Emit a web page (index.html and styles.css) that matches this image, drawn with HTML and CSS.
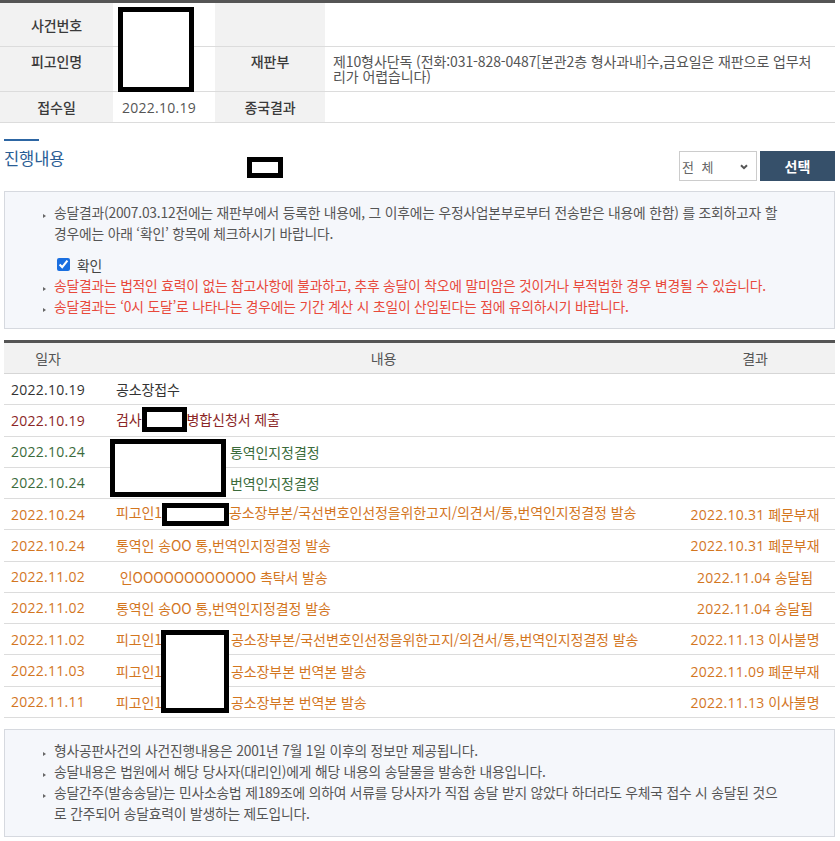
FILE: index.html
```html
<!DOCTYPE html>
<html lang="ko">
<head>
<meta charset="utf-8">
<title>사건진행내용</title>
<link rel="stylesheet" href="styles.css">
</head>
<body>
<div class="page">
  <div class="case-info">
    <div class="th">사건번호</div>
    <div class="td"></div>
    <div class="th"></div>
    <div class="td"></div>

    <div class="th th-top">피고인명</div>
    <div class="td"></div>
    <div class="th th-top">재판부</div>
    <div class="td court">제10형사단독 (전화:031-828-0487[본관2층 형사과내]수,금요일은 재판으로 업무처<br>리가 어렵습니다)</div>

    <div class="th">접수일</div>
    <div class="td num">2022.10.19</div>
    <div class="th">종국결과</div>
    <div class="td"></div>
  </div>

  <div class="progress-head">
    <div class="title-block">
      <span class="title-bar"></span>
      <h2 class="title">진행내용</h2>
    </div>
    <div class="controls">
      <div class="select">
        <span class="select-text">전 체</span>
        <svg class="chev" width="8" height="6" viewBox="0 0 8 6"><path d="M1 1.2 L4 4.2 L7 1.2" fill="none" stroke="#555" stroke-width="2"/></svg>
      </div>
      <button class="btn" type="button">선택</button>
    </div>
  </div>

  <div class="notice notice-top">
    <ul>
      <li>송달결과(2007.03.12전에는 재판부에서 등록한 내용에, 그 이후에는 우정사업본부로부터 전송받은 내용에 한함) 를 조회하고자 할<br>경우에는 아래 ‘확인’ 항목에 체크하시기 바랍니다.</li>
    </ul>
    <label class="check"><input type="checkbox" checked><span>확인</span></label>
    <ul>
      <li class="warn">송달결과는 법적인 효력이 없는 참고사항에 불과하고, 추후 송달이 착오에 말미암은 것이거나 부적법한 경우 변경될 수 있습니다.</li>
      <li class="warn">송달결과는 ‘0시 도달’로 나타나는 경우에는 기간 계산 시 초일이 산입된다는 점에 유의하시기 바랍니다.</li>
    </ul>
  </div>

  <div class="progress-table">
    <div class="thead">
      <div>일자</div>
      <div>내용</div>
      <div>결과</div>
    </div>
    <div class="row c-black">
      <div class="num">2022.10.19</div>
      <div class="content">공소장접수</div>
      <div class="result"></div>
    </div>
    <div class="row c-red">
      <div class="num">2022.10.19</div>
      <div class="content">검사<span class="redact r-inline1"></span>병합신청서 제출</div>
      <div class="result"></div>
    </div>
    <div class="row c-green">
      <div class="num">2022.10.24</div>
      <div class="content"><span class="gap gap-wide"></span>통역인지정결정</div>
      <div class="result"></div>
    </div>
    <div class="row c-green">
      <div class="num">2022.10.24</div>
      <div class="content"><span class="gap gap-wide"></span>번역인지정결정</div>
      <div class="result"></div>
    </div>
    <div class="row c-orange">
      <div class="num">2022.10.24</div>
      <div class="content">피고인1<span class="redact r-inline2"></span>공소장부본/국선변호인선정을위한고지/의견서/통,번역인지정결정 발송</div>
      <div class="result"><span class="num">2022.10.31</span> 폐문부재</div>
    </div>
    <div class="row c-orange">
      <div class="num">2022.10.24</div>
      <div class="content">통역인 송OO 통,번역인지정결정 발송</div>
      <div class="result"><span class="num">2022.10.31</span> 폐문부재</div>
    </div>
    <div class="row c-orange">
      <div class="num">2022.11.02</div>
      <div class="content">&nbsp;인OOOOOOOOOOOO 촉탁서 발송</div>
      <div class="result"><span class="num">2022.11.04</span> 송달됨</div>
    </div>
    <div class="row c-orange">
      <div class="num">2022.11.02</div>
      <div class="content">통역인 송OO 통,번역인지정결정 발송</div>
      <div class="result"><span class="num">2022.11.04</span> 송달됨</div>
    </div>
    <div class="row c-orange">
      <div class="num">2022.11.02</div>
      <div class="content">피고인1<span class="gap gap-name"></span>공소장부본/국선변호인선정을위한고지/의견서/통,번역인지정결정 발송</div>
      <div class="result"><span class="num">2022.11.13</span> 이사불명</div>
    </div>
    <div class="row c-orange">
      <div class="num">2022.11.03</div>
      <div class="content">피고인1<span class="gap gap-name"></span>공소장부본 번역본 발송</div>
      <div class="result"><span class="num">2022.11.09</span> 폐문부재</div>
    </div>
    <div class="row c-orange">
      <div class="num">2022.11.11</div>
      <div class="content">피고인1<span class="gap gap-name"></span>공소장부본 번역본 발송</div>
      <div class="result"><span class="num">2022.11.13</span> 이사불명</div>
    </div>
  </div>

  <div class="notice notice-bottom">
    <ul>
      <li>형사공판사건의 사건진행내용은 2001년 7월 1일 이후의 정보만 제공됩니다.</li>
      <li>송달내용은 법원에서 해당 당사자(대리인)에게 해당 내용의 송달물을 발송한 내용입니다.</li>
      <li>송달간주(발송송달)는 민사소송법 제189조에 의하여 서류를 당사자가 직접 송달 받지 않았다 하더라도 우체국 접수 시 송달된 것으<br>로 간주되어 송달효력이 발생하는 제도입니다.</li>
    </ul>
  </div>

  <span class="redact r-top"></span>
  <span class="redact r-small"></span>
  <span class="redact r-rows34"></span>
  <span class="redact r-rows911"></span>
</div>
</body>
</html>
```

FILE: styles.css
```css
* { box-sizing: border-box; }

body {
  margin: 0;
  background: #fff;
  color: #333;
  font-family: "Noto Sans CJK KR", sans-serif;
  font-size: 14px;
  letter-spacing: -0.1px;
}

.page {
  position: relative;
  width: 835px;
}

.num {
  font-family: "Open Sans", "Noto Sans CJK KR", sans-serif;
  font-size: 14px;
  letter-spacing: 0.25px;
}

/* case info table */
.case-info {
  display: grid;
  grid-template-columns: 113px 102px 110px 1fr;
  grid-template-rows: 44px 45px 31px;
  border-top: 3px solid #555;
}
.case-info > div {
  display: flex;
  align-items: center;
  border-bottom: 1px solid #dcdcdc;
}
.th {
  justify-content: center;
  background: #f2f2f2;
  color: #3a3a3a;
  font-weight: 500;
}
.th-top {
  align-items: flex-start !important;
  padding-top: 4px;
}
.td {
  padding-left: 9px;
  color: #555;
}
.court {
  padding-left: 8px;
  line-height: 15px;
}

/* heading */
.progress-head {
  display: flex;
  justify-content: space-between;
  align-items: flex-start;
  margin-top: 16px;
}
.title-block {
  padding-left: 4px;
}
.title-bar {
  display: block;
  width: 35px;
  height: 2px;
  background: #2d66a3;
}
.title {
  margin: 6px 0 0;
  font-size: 16.5px;
  line-height: 22px;
  font-weight: normal;
  letter-spacing: -0.1px;
  color: #2a5d95;
}
.controls {
  display: flex;
  gap: 3px;
  margin-top: 12px;
}
.select {
  display: flex;
  align-items: center;
  justify-content: space-between;
  width: 78px;
  height: 30px;
  padding: 0 8px 0 2px;
  border: 1px solid #ccc;
  background: #fff;
  color: #666;
  font-size: 13px;
  letter-spacing: 2px;
}
.chev { margin-top: 1px; }
.btn {
  width: 75px;
  height: 30px;
  border: 0;
  background: #36506a;
  color: #fff;
  font-family: "Noto Sans CJK KR", sans-serif;
  font-size: 14px;
  font-weight: bold;
  letter-spacing: 0;
  padding: 0;
}

/* notice boxes */
.notice {
  margin-left: 4px;
  border: 1px solid #d6d9df;
  background: #f5f7fb;
  color: #555;
  font-size: 13.8px;
  letter-spacing: -0.2px;
}
.notice ul {
  margin: 0;
  padding: 0;
  list-style: none;
}
.notice li {
  position: relative;
  line-height: 21px;
}
.notice li::before {
  content: "";
  position: absolute;
  left: -11px;
  top: 12px;
  border-left: 3px solid #666;
  border-top: 2px solid transparent;
  border-bottom: 2px solid transparent;
}
.notice-top {
  margin-top: 10px;
  padding: 10px 15px 11px 49px;
}
.notice-bottom {
  margin-top: 11px;
  padding: 10.5px 15px 11.5px 49px;
}
.check {
  display: flex;
  align-items: center;
  height: 21px;
  margin-top: 10px;
  color: #444;
}
.check input {
  width: 13px;
  height: 13px;
  margin: 0 7px 0 3px;
  accent-color: #1a6fe0;
}
.warn { color: #e8493b; }

/* progress table */
.progress-table {
  margin: 11px 0 0 4px;
  border-top: 3px solid #555;
}
.thead, .row {
  display: grid;
  grid-template-columns: 88px 1fr 160px;
  align-items: center;
}
.thead {
  height: 31px;
  background: #f2f2f2;
  border-bottom: 1px solid #d6d6d6;
  color: #555;
  text-align: center;
}
.row {
  height: 31.27px;
  border-bottom: 1px solid #dcdcdc;
}
.row > .num { text-align: center; }
.content {
  padding-left: 24px;
  white-space: nowrap;
}
.result { text-align: center; }

.c-black { color: #333; }
.c-red { color: #8b2626; }
.c-green { color: #3b6b3b; }
.c-orange { color: #d3761f; }

.gap {
  display: inline-block;
  vertical-align: middle;
}
.gap-wide { width: 114px; }
.gap-name { width: 69px; }

/* redaction boxes */
.redact {
  display: inline-block;
  border: 5px solid #000;
  background: #fff;
}
.r-inline1 {
  width: 45px;
  height: 25px;
  vertical-align: middle;
  margin-top: -4px;
}
.r-inline2 {
  width: 67px;
  height: 23px;
  vertical-align: middle;
}
.r-top, .r-small, .r-rows34, .r-rows911 {
  position: absolute;
}
.r-top { left: 118px; top: 7px; width: 76px; height: 85px; }
.r-small { left: 247px; top: 157px; width: 36px; height: 21px; }
.r-rows34 { left: 110px; top: 439px; width: 116px; height: 58px; }
.r-rows911 { left: 161px; top: 630px; width: 68px; height: 83px; }
```
